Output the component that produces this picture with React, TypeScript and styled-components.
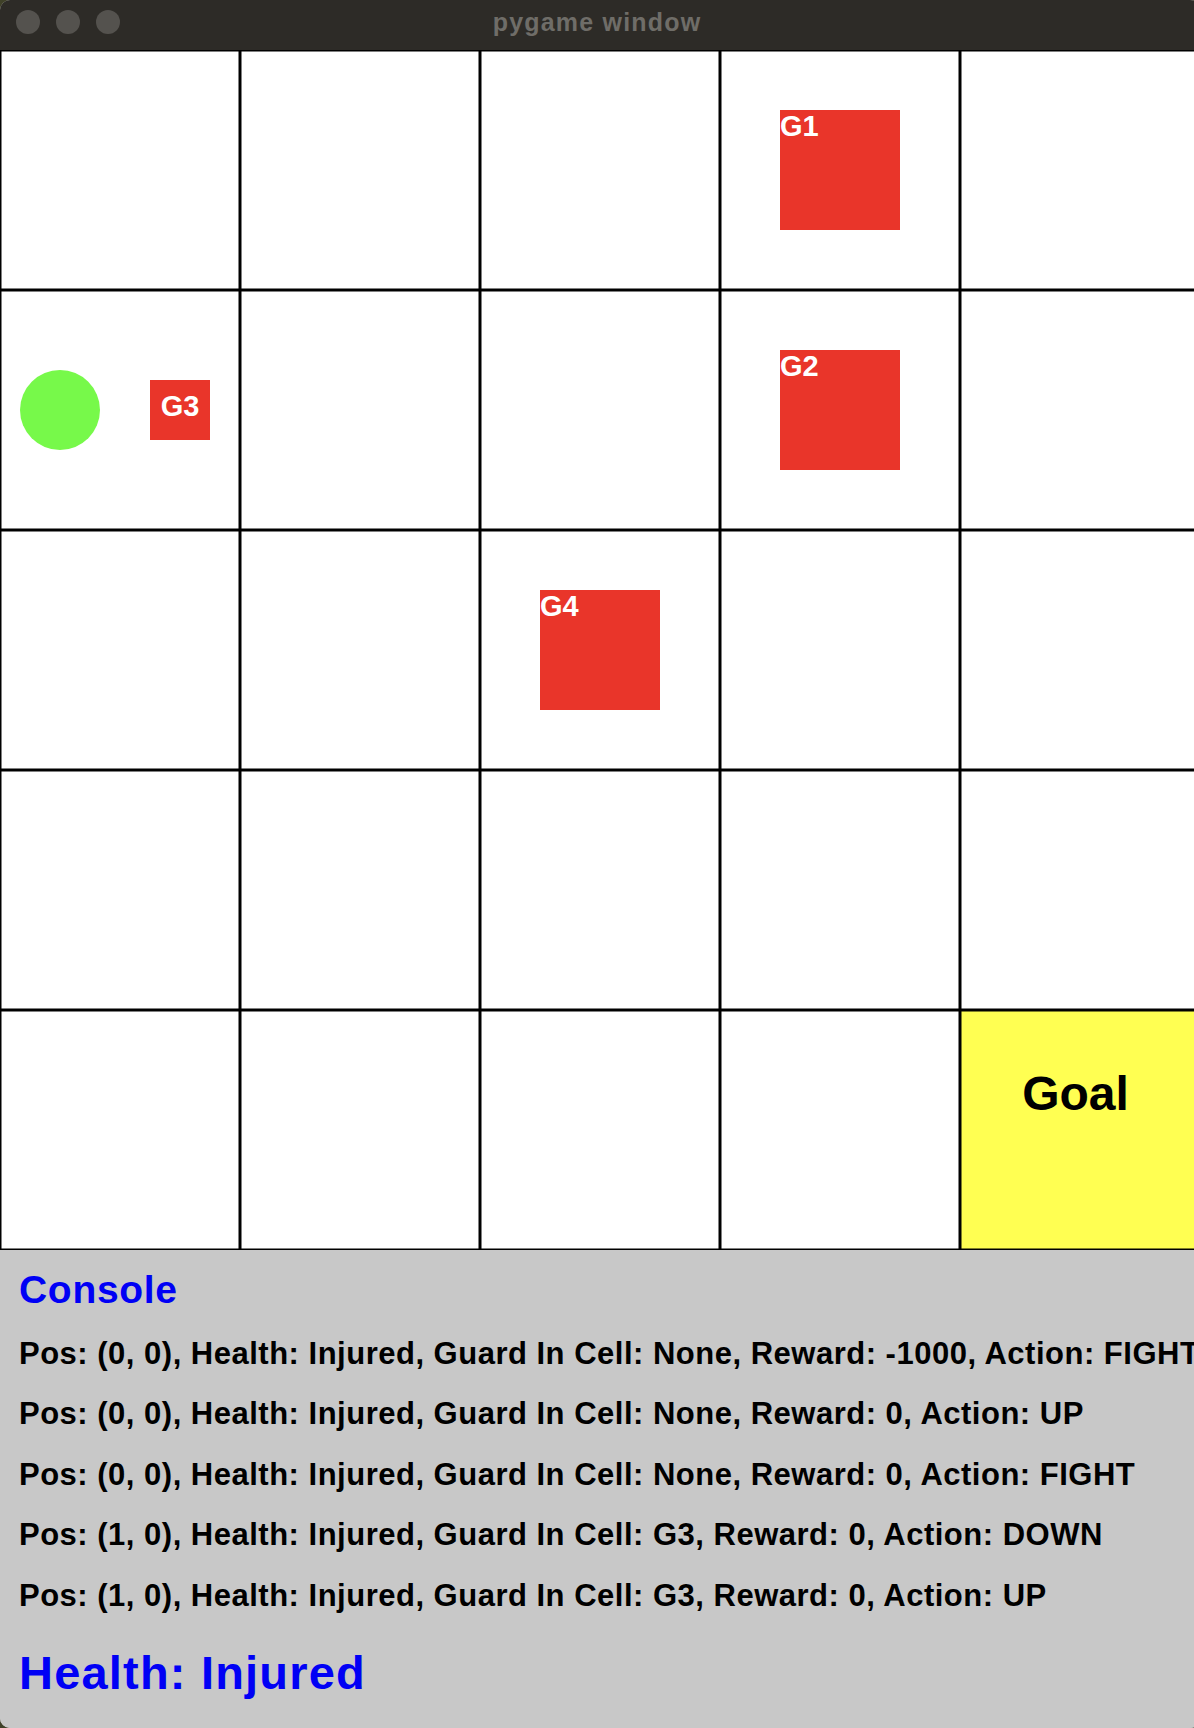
import React from "react";
import styled, { createGlobalStyle } from "styled-components";

const Global = createGlobalStyle`
  html, body {
    margin: 0;
    padding: 0;
    background: #3f4128;
    overflow: hidden;
  }
  body {
    font-family: "Liberation Sans", Arial, sans-serif;
  }
`;

const Window = styled.div`
  width: 1200px;
  height: 1728px;
  border-radius: 10px;
  overflow: hidden;
  background: #c8c8c8;
  display: flex;
  flex-direction: column;
`;

const TitleBar = styled.div`
  height: 50px;
  flex: none;
  background: #2d2b27;
  display: flex;
  align-items: center;
  position: relative;
`;

const Lights = styled.div`
  display: flex;
  gap: 16px;
  padding-left: 16px;
  padding-bottom: 6px;
`;

const Light = styled.span`
  width: 24px;
  height: 24px;
  border-radius: 50%;
  background: #54524e;
  display: block;
`;

const Title = styled.div`
  position: absolute;
  left: 0;
  width: 1194px;
  top: 0;
  height: 50px;
  display: flex;
  align-items: center;
  justify-content: center;
  padding-bottom: 6px;
  box-sizing: border-box;
  color: #6f6d68;
  font-weight: 700;
  font-size: 25px;
  letter-spacing: 1.2px;
`;

const Board = styled.div`
  display: grid;
  grid-template-columns: repeat(5, 240px);
  grid-template-rows: repeat(5, 240px);
  background: #fff;
  flex: none;
`;

const Cell = styled.div<{ $goal?: boolean }>`
  box-sizing: border-box;
  background: ${(p) => (p.$goal ? "#ffff52" : "#ffffff")};
  box-shadow: inset 0 0 0 1.5px #000;
  display: flex;
  align-items: center;
`;

const GoalCell = styled(Cell)`
  align-items: flex-start;
  justify-content: center;
  padding: 58px 9px 0 0;
`;

const GoalText = styled.div`
  font-size: 48px;
  font-weight: 700;
  color: #000;
  line-height: 52px;
`;

const Guard = styled.div`
  width: 120px;
  height: 120px;
  margin: 0 0 0 60px;
  background: #e9352a;
  color: #fff;
  font-size: 29px;
  font-weight: 700;
  line-height: 32px;
  align-self: center;
`;

const SmallGuard = styled.div`
  width: 60px;
  height: 60px;
  background: #e9352a;
  color: #fff;
  font-size: 29px;
  font-weight: 700;
  display: flex;
  align-items: center;
  justify-content: center;
  padding-bottom: 8px;
  box-sizing: border-box;
`;

const AgentCell = styled(Cell)`
  padding-left: 20px;
  gap: 50px;
`;

const Agent = styled.div`
  width: 80px;
  height: 80px;
  border-radius: 50%;
  background: #77f94a;
`;

const Console = styled.div`
  flex: 1;
  background: #c8c8c8;
  padding: 18px 0 0 19px;
  white-space: nowrap;
`;

const ConsoleTitle = styled.div`
  color: #0000f5;
  font-weight: 700;
  font-size: 39px;
  letter-spacing: 0.7px;
  line-height: 44px;
  margin-bottom: 12px;
`;

const LogLine = styled.div`
  color: #000;
  font-weight: 700;
  font-size: 31px;
  letter-spacing: 0.5px;
  line-height: 60.4px;
`;

const HealthLine = styled.div`
  color: #0000f5;
  font-weight: 700;
  font-size: 47px;
  letter-spacing: 1.2px;
  line-height: 52px;
  margin-top: 20.7px;
`;

const guards: Record<string, string> = {
  "0,3": "G1",
  "1,3": "G2",
  "2,2": "G4",
};

const logs = [
  "Pos: (0, 0), Health: Injured, Guard In Cell: None, Reward: -1000, Action: FIGHT",
  "Pos: (0, 0), Health: Injured, Guard In Cell: None, Reward: 0, Action: UP",
  "Pos: (0, 0), Health: Injured, Guard In Cell: None, Reward: 0, Action: FIGHT",
  "Pos: (1, 0), Health: Injured, Guard In Cell: G3, Reward: 0, Action: DOWN",
  "Pos: (1, 0), Health: Injured, Guard In Cell: G3, Reward: 0, Action: UP",
];

export default function App() {
  const cells: React.ReactNode[] = [];
  for (let r = 0; r < 5; r++) {
    for (let c = 0; c < 5; c++) {
      const key = `${r},${c}`;
      if (r === 4 && c === 4) {
        cells.push(
          <GoalCell key={key} $goal>
            <GoalText>Goal</GoalText>
          </GoalCell>
        );
      } else if (r === 1 && c === 0) {
        cells.push(
          <AgentCell key={key}>
            <Agent />
            <SmallGuard>G3</SmallGuard>
          </AgentCell>
        );
      } else if (guards[key]) {
        cells.push(
          <Cell key={key}>
            <Guard>{guards[key]}</Guard>
          </Cell>
        );
      } else {
        cells.push(<Cell key={key} />);
      }
    }
  }
  return (
    <>
      <Global />
      <Window>
        <TitleBar>
          <Lights>
            <Light />
            <Light />
            <Light />
          </Lights>
          <Title>pygame window</Title>
        </TitleBar>
        <Board>{cells}</Board>
        <Console>
          <ConsoleTitle>Console</ConsoleTitle>
          {logs.map((l, i) => (
            <LogLine key={i}>{l}</LogLine>
          ))}
          <HealthLine>Health: Injured</HealthLine>
        </Console>
      </Window>
    </>
  );
}
